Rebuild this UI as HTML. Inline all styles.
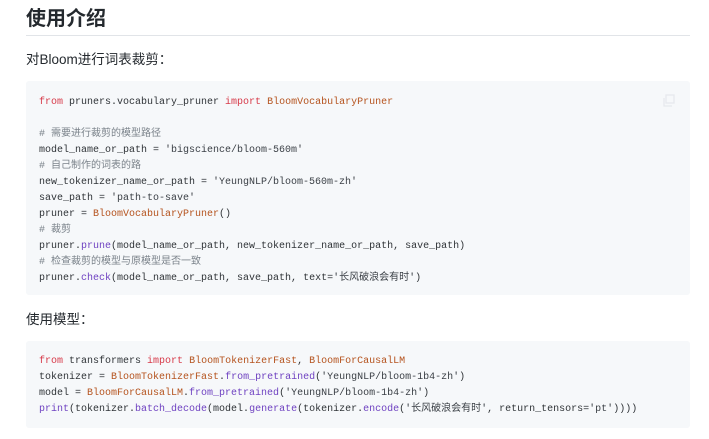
<!DOCTYPE html>
<html><head><meta charset="utf-8"><style>
body{margin:0;width:709px;height:439px;background:#fff;font-family:"Liberation Sans","Noto Sans CJK SC",sans-serif;color:#24292e;overflow:hidden;position:relative}
h1{position:absolute;left:26px;top:6px;margin:0;font-size:20px;font-weight:bold;line-height:26px}
.hr{position:absolute;left:26px;top:35px;width:664px;height:1px;background:#e1e4e8}
p{position:absolute;left:26px;margin:0;font-size:13.5px;line-height:20px}
.code{position:absolute;left:26px;width:664px;background:#f6f8fa;border-radius:3px}
pre{margin:0;position:absolute;left:13px;font-family:"Liberation Mono","Noto Sans CJK SC",monospace;font-size:10px;line-height:16px;color:#2f3337}
.k{color:#d73a49}.c{color:#b5531e}.f{color:#6f42c1}.s{color:#3a3f45}.m{color:#7a828a}
</style></head><body>
<h1>使用介绍</h1>
<div class="hr"></div>
<p style="top:50px">对Bloom进行词表裁剪：</p>
<div class="code" style="top:81px;height:214px">
<pre style="top:14px"><span class="k">from</span> pruners.vocabulary_pruner <span class="k">import</span> <span class="c">BloomVocabularyPruner</span>

<span class="m"># 需要进行裁剪的模型路径</span>
model_name_or_path = <span class="s">'bigscience/bloom-560m'</span>
<span class="m"># 自己制作的词表的路</span>
new_tokenizer_name_or_path = <span class="s">'YeungNLP/bloom-560m-zh'</span>
save_path = <span class="s">'path-to-save'</span>
pruner = <span class="c">BloomVocabularyPruner</span>()
<span class="m"># 裁剪</span>
pruner.<span class="f">prune</span>(model_name_or_path, new_tokenizer_name_or_path, save_path)
<span class="m"># 检查裁剪的模型与原模型是否一致</span>
pruner.<span class="f">check</span>(model_name_or_path, save_path, text=<span class="s">'长风破浪会有时'</span>)</pre>
<svg style="position:absolute;left:636px;top:13px" width="14" height="14" viewBox="0 0 14 14" fill="none" stroke="#e6e9ed" stroke-width="1.3"><rect x="4" y="1" width="8" height="8"/><path d="M2 4v8h8"/></svg>
</div>
<p style="top:310px">使用模型：</p>
<div class="code" style="top:341px;height:87px">
<pre style="top:13px"><span class="k">from</span> transformers <span class="k">import</span> <span class="c">BloomTokenizerFast</span>, <span class="c">BloomForCausalLM</span>
tokenizer = <span class="c">BloomTokenizerFast</span>.<span class="f">from_pretrained</span>(<span class="s">'YeungNLP/bloom-1b4-zh'</span>)
model = <span class="c">BloomForCausalLM</span>.<span class="f">from_pretrained</span>(<span class="s">'YeungNLP/bloom-1b4-zh'</span>)
<span class="f">print</span>(tokenizer.<span class="f">batch_decode</span>(model.<span class="f">generate</span>(tokenizer.<span class="f">encode</span>(<span class="s">'长风破浪会有时'</span>, return_tensors=<span class="s">'pt'</span>))))</pre>
</div>
</body></html>
